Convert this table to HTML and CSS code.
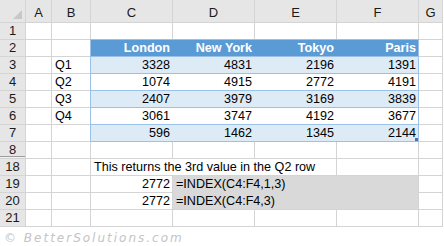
FILE: index.html
```html
<!DOCTYPE html>
<html>
<head>
<meta charset="utf-8">
<title>INDEX example</title>
<link rel="stylesheet" href="styles.css">
</head>
<body>
<div class="sheet">
  <div class="corner"><svg width="25" height="22" viewBox="0 0 25 22"><polygon points="22,10 22,19 13,19" fill="#c8c8c8"/></svg></div>
  <div class="ch">A</div><div class="ch">B</div><div class="ch">C</div><div class="ch">D</div><div class="ch">E</div><div class="ch">F</div><div class="ch">G</div>

  <div class="rh">1</div><div class="c"></div><div class="c"></div><div class="c"></div><div class="c"></div><div class="c"></div><div class="c"></div><div class="c"></div>

  <div class="tbl">
    <div class="trow thead"><span>London</span><span>New York</span><span>Tokyo</span><span>Paris</span></div>
    <div class="trow band"><span>3328</span><span>4831</span><span>2196</span><span>1391</span></div>
    <div class="trow"><span>1074</span><span>4915</span><span>2772</span><span>4191</span></div>
    <div class="trow band"><span>2407</span><span>3979</span><span>3169</span><span>3839</span></div>
    <div class="trow"><span>3061</span><span>3747</span><span>4192</span><span>3677</span></div>
    <div class="trow band"><span>596</span><span>1462</span><span>1345</span><span>2144</span></div>
    <div class="handle"></div>
  </div>

  <div class="rh">2</div><div class="c"></div><div class="c"></div><div class="c"></div>
  <div class="rh">3</div><div class="c"></div><div class="c">Q1</div><div class="c"></div>
  <div class="rh">4</div><div class="c"></div><div class="c">Q2</div><div class="c"></div>
  <div class="rh">5</div><div class="c"></div><div class="c">Q3</div><div class="c"></div>
  <div class="rh">6</div><div class="c"></div><div class="c">Q4</div><div class="c"></div>
  <div class="rh">7</div><div class="c"></div><div class="c"></div><div class="c"></div>

  <div class="rh hidden-below">8</div><div class="c"></div><div class="c"></div><div class="c"></div><div class="c"></div><div class="c"></div><div class="c"></div><div class="c"></div>

  <div class="rh">18</div><div class="c"></div><div class="c"></div><div class="c span3">This returns the 3rd value in the Q2 row</div><div class="c"></div><div class="c"></div>

  <div class="formulas">
    <div class="frow">=INDEX(C4:F4,1,3)</div>
    <div class="frow">=INDEX(C4:F4,3)</div>
  </div>

  <div class="rh">19</div><div class="c"></div><div class="c"></div><div class="c num">2772</div><div class="c"></div>
  <div class="rh">20</div><div class="c"></div><div class="c"></div><div class="c num">2772</div><div class="c"></div>

  <div class="rh">21</div><div class="c"></div><div class="c"></div><div class="c"></div><div class="c"></div><div class="c"></div><div class="c"></div><div class="c"></div>
</div>
<div class="watermark">© BetterSolutions.com</div>
</body>
</html>
```
FILE: styles.css
```css
html, body {
  margin: 0;
  padding: 0;
  background: #ffffff;
}

body {
  width: 444px;
  height: 246px;
  overflow: hidden;
  font-family: "Liberation Sans", Arial, sans-serif;
  font-size: 12.6px;
  color: #000;
}

.sheet {
  display: grid;
  grid-template-columns: 25px 25px 38px 81px 81px 81px 81px 23px;
  grid-template-rows: 22px repeat(12, 16px);
  gap: 1px;
  padding: 0 1px 1px 0;
  width: max-content;
  background: #d4d4d4;
}

.corner {
  background: #e6e6e6;
  display: flex;
}

.ch {
  background: #e6e6e6;
  display: flex;
  align-items: flex-end;
  justify-content: center;
  line-height: 16px;
  padding-bottom: 1px;
  box-sizing: border-box;
  color: #1a1a1a;
  font-size: 13px;
}

.rh {
  background: #e6e6e6;
  text-align: center;
  line-height: 16px;
  color: #1a1a1a;
  font-size: 13px;
}

.hidden-below {
  box-shadow: inset 0 -1px 0 #f2f2f2, inset 0 -2px 0 #9c9c9c;
}

.c {
  background: #ffffff;
  line-height: 16px;
  padding: 0 2px 0 3px;
  white-space: nowrap;
}

.num {
  text-align: right;
}

.span3 {
  grid-column: span 3;
}

.tbl {
  grid-column: 4 / 8;
  grid-row: 3 / 9;
  display: flex;
  flex-direction: column;
  gap: 1px;
  background: #9bc2e6;
  box-shadow: 0 0 0 1px #9bc2e6;
  position: relative;
}

.trow {
  display: grid;
  grid-template-columns: 81px 82px 82px 82px;
  height: 16px;
  line-height: 16px;
  background: #ffffff;
}

.trow span {
  text-align: right;
  padding-right: 2px;
}

.band {
  background: #ddebf7;
}

.thead {
  background: #5b9bd5;
  color: #ffffff;
  font-weight: bold;
}

.handle {
  position: absolute;
  right: 0;
  bottom: 0;
  width: 3px;
  height: 3px;
  background: #4a6fb5;
}

.formulas {
  grid-column: 5 / 8;
  grid-row: 11 / 13;
  display: flex;
  flex-direction: column;
  gap: 1px;
  background: #d9d9d9;
}

.frow {
  height: 16px;
  line-height: 16px;
  padding-left: 3px;
}

.watermark {
  padding: 3px 0 0 4px;
  font-family: "DejaVu Sans", sans-serif;
  font-style: italic;
  font-size: 12px;
  letter-spacing: 2px;
  line-height: 16px;
  color: #c4c4c4;
}
```
